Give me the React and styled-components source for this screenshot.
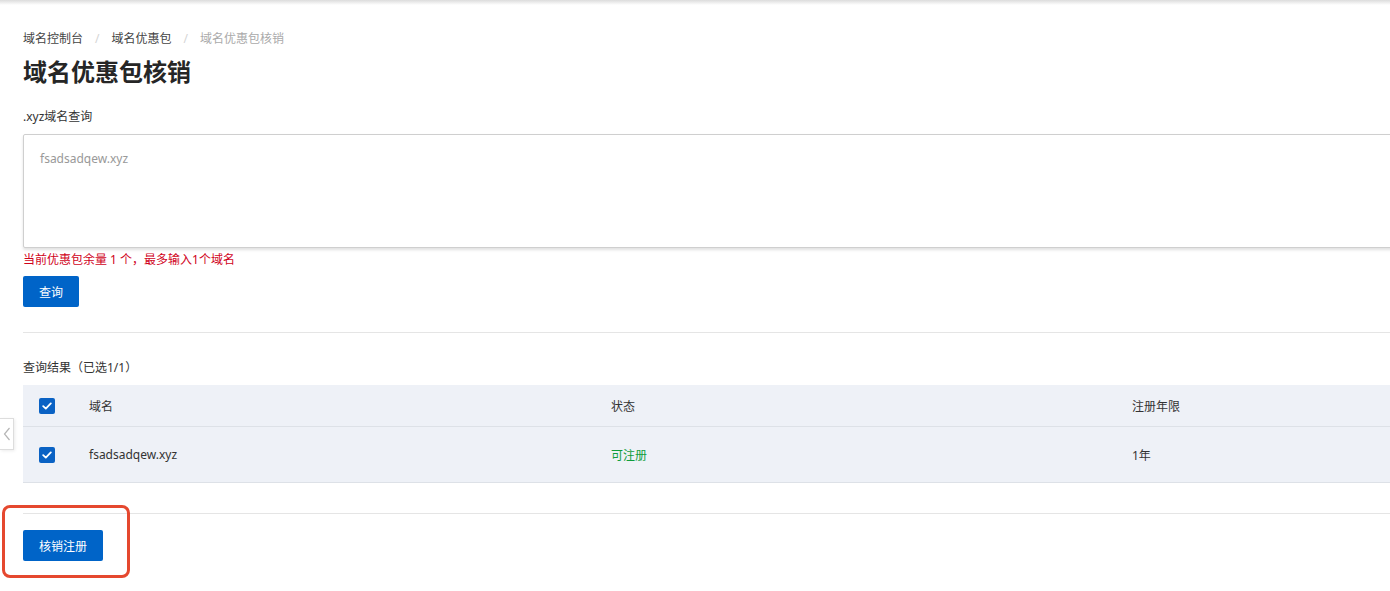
import React from 'react'
import styled, { createGlobalStyle } from 'styled-components'

const GlobalStyle = createGlobalStyle`
  html, body {
    margin: 0;
    padding: 0;
    background: #fff;
    overflow: hidden;
  }
  body {
    font-family: "Noto Sans", "Noto Sans CJK SC", sans-serif;
    font-size: 12px;
    color: #333;
  }
`

function Check() {
  return (
    <CheckBox>
      <svg width="10" height="8" viewBox="0 0 10 8">
        <path d="M1.2 4.2 L3.8 6.6 L8.8 1.4" fill="none" stroke="#fff" strokeWidth="1.8" strokeLinecap="round" strokeLinejoin="round" />
      </svg>
    </CheckBox>
  )
}

function App() {
  return (
    <>
      <GlobalStyle />
      <Page>
        <TopShade />
        <Content>
          <Breadcrumb>
            <Crumb>域名控制台</Crumb>
            <Sep>/</Sep>
            <Crumb>域名优惠包</Crumb>
            <Sep>/</Sep>
            <Crumb $current>域名优惠包核销</Crumb>
          </Breadcrumb>
          <Title>域名优惠包核销</Title>

          <Label $top={20}>.xyz域名查询</Label>
          <TextArea defaultValue="" placeholder="fsadsadqew.xyz" />
          <Hint>当前优惠包余量 1 个，最多输入1个域名</Hint>
          <Button $w={56} $top={7}>查询</Button>

          <Divider $top={25} />

          <Label $top={26}>查询结果（已选1/1）</Label>
          <Table>
            <Row $head>
              <Cell><Check /></Cell>
              <Cell>域名</Cell>
              <Cell>状态</Cell>
              <Cell>注册年限</Cell>
            </Row>
            <Row>
              <Cell><Check /></Cell>
              <Cell>fsadsadqew.xyz</Cell>
              <Cell $green>可注册</Cell>
              <Cell>1年</Cell>
            </Row>
          </Table>

          <Divider $top={30} />
          <Button $w={80} $top={16}>核销注册</Button>
        </Content>

        <SideTab>
          <svg width="8" height="14" viewBox="0 0 8 14">
            <path d="M6.5 1 L1.5 7 L6.5 13" fill="none" stroke="#b5b5b5" strokeWidth="1.2" />
          </svg>
        </SideTab>
        <Annotation />
      </Page>
    </>
  )
}

const Page = styled.div`
  position: relative;
  width: 1390px;
  height: 591px;
  overflow: hidden;
  background: #fff;
`
const TopShade = styled.div`
  position: absolute;
  left: 0;
  right: 0;
  top: 0;
  height: 5px;
  background: linear-gradient(#dcdcdc, rgba(255, 255, 255, 0));
`
const Content = styled.div`
  display: flex;
  flex-direction: column;
  align-items: flex-start;
  padding: 30px 0 0 23px;
  width: 1640px;
`
const Breadcrumb = styled.div`
  display: flex;
  align-items: center;
  gap: 12px;
  height: 17px;
  line-height: 17px;
`
const Crumb = styled.span`
  color: ${p => (p.$current ? '#aaa' : '#444')};
`
const Sep = styled.span`
  color: #d5d5d5;
`
const Title = styled.h1`
  margin: 9px 0 0;
  font-size: 24px;
  line-height: 32px;
  font-weight: 700;
  color: #262626;
  letter-spacing: 0;
`
const Label = styled.div`
  margin-top: ${p => p.$top || 12}px;
  line-height: 18px;
  color: #333;
`
const TextArea = styled.textarea`
  margin-top: 8px;
  box-sizing: border-box;
  width: 1400px;
  height: 114px;
  border: 1px solid #cfcfcf;
  border-radius: 2px;
  box-shadow: 0 2px 3px rgba(0, 0, 0, 0.12);
  padding: 15px 16px;
  font-family: inherit;
  font-size: 12px;
  line-height: 17px;
  resize: none;
  outline: none;
  &::placeholder {
    color: #999;
  }
`
const Hint = styled.div`
  margin-top: 3px;
  line-height: 18px;
  color: #d0021b;
`
const Button = styled.button`
  margin-top: ${p => p.$top || 10}px;
  width: ${p => p.$w}px;
  height: 31px;
  border: none;
  border-radius: 2px;
  background: #0064c8;
  color: #fff;
  font-family: inherit;
  font-size: 12px;
  padding: 0;
`
const Divider = styled.div`
  margin-top: ${p => p.$top}px;
  width: 100%;
  height: 1px;
  background: #e5e5e5;
`
const Table = styled.div`
  margin-top: 8px;
  width: 100%;
  display: flex;
  flex-direction: column;
`
const Row = styled.div`
  box-sizing: border-box;
  display: grid;
  grid-template-columns: 50px 522px 521px 1fr;
  align-items: center;
  height: ${p => (p.$head ? 42 : 56)}px;
  background: #eef1f7;
  border-bottom: 1px solid #dde1e7;
`
const Cell = styled.div`
  padding-left: 16px;
  display: flex;
  align-items: center;
  color: ${p => (p.$green ? '#0f9d3b' : '#333')};
`
const CheckBox = styled.span`
  display: inline-flex;
  align-items: center;
  justify-content: center;
  width: 16px;
  height: 16px;
  border-radius: 2px;
  background: #0a62c4;
`
const SideTab = styled.div`
  position: absolute;
  left: 0;
  top: 418px;
  width: 14px;
  height: 32px;
  box-sizing: border-box;
  background: #fff;
  border: 1px solid #ddd;
  border-left: none;
  box-shadow: 1px 1px 3px rgba(0, 0, 0, 0.08);
  display: flex;
  align-items: center;
  justify-content: center;
`
const Annotation = styled.div`
  position: absolute;
  left: 2px;
  top: 505px;
  width: 128px;
  height: 73px;
  box-sizing: border-box;
  border: 3px solid #e5482f;
  border-radius: 8px;
`

export default App
